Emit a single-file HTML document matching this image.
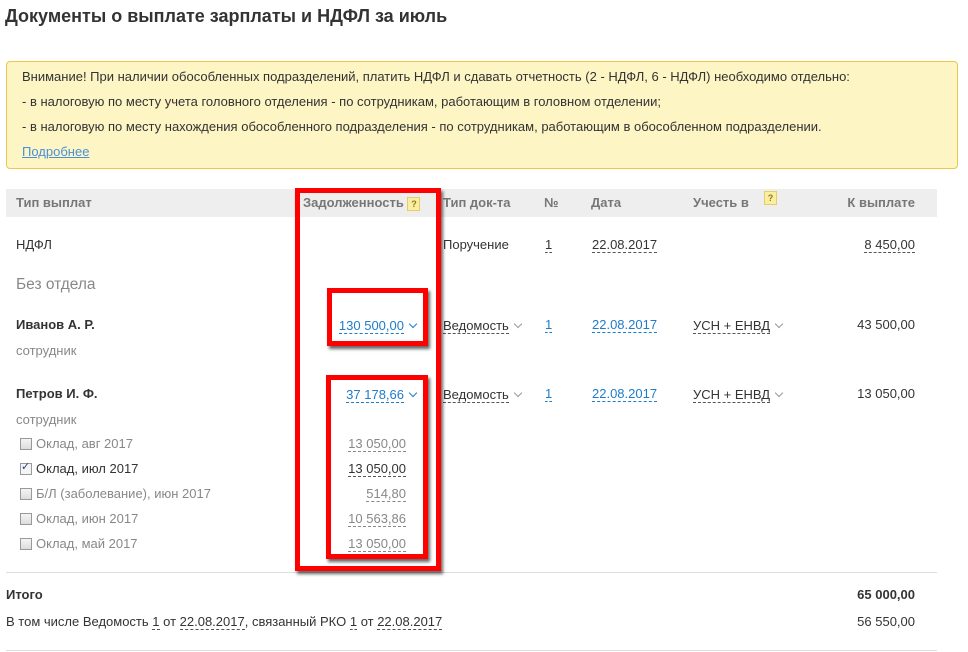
<!DOCTYPE html>
<html><head><meta charset="utf-8"><style>
body{margin:0;width:968px;height:652px;background:#fff;font-family:"Liberation Sans",Arial,sans-serif;color:#333;font-size:13px;position:relative;overflow:hidden}
.a{position:absolute;line-height:16px;white-space:nowrap}
.r{text-align:right}
.h{color:#777;font-weight:bold;font-size:13px}
.d{border-bottom:1px dashed #555;line-height:14px}
.b{color:#1f7cc9;border-bottom:1px dashed #1f7cc9;line-height:14px}
.g{color:#888}
.gd{color:#888;border-bottom:1px dashed #888;line-height:14px}
.chev{display:inline-block;width:5px;height:5px;border-right:1px solid #999;border-bottom:1px solid #999;transform:rotate(45deg);margin-left:6px;position:relative;top:-3px}
.cb{position:absolute;width:10px;height:10px;border:1px solid #999;background:linear-gradient(#f4f4f4,#ddd)}
.q{display:inline-block;width:11px;height:12px;background:#fbeea0;border:1px solid #e3cf6a;color:#8a7a20;font-size:9px;line-height:12px;text-align:center;vertical-align:middle;font-weight:bold}
.red{position:absolute;border:5px solid #f00;box-shadow:2px 3px 3px rgba(0,0,0,.6)}
</style></head><body>
<div class="a" style="left:5px;top:5px;font-size:18px;font-weight:bold;color:#333;line-height:22px">Документы о выплате зарплаты и НДФЛ за июль</div>
<div style="position:absolute;left:6px;top:61px;width:950px;height:106px;background:#fdf5c4;border:1px solid #eac94a;border-radius:4px"></div>
<div class="a" style="left:22px;top:69px">Внимание! При наличии обособленных подразделений, платить НДФЛ и сдавать отчетность (2 - НДФЛ, 6 - НДФЛ) необходимо отдельно:</div>
<div class="a" style="left:22px;top:94px">- в налоговую по месту учета головного отделения - по сотрудникам, работающим в головном отделении;</div>
<div class="a" style="left:22px;top:119px">- в налоговую по месту нахождения обособленного подразделения - по сотрудникам, работающим в обособленном подразделении.</div>
<div class="a" style="left:22px;top:144px;color:#4a90d9;text-decoration:underline">Подробнее</div>

<div style="position:absolute;left:6px;top:189px;width:931px;height:28px;background:#eeeeee"></div>
<div class="a h" style="left:16px;top:195px">Тип выплат</div>
<div class="a h" style="left:303px;top:195px">Задолженность <span class="q">?</span></div>
<div class="a h" style="left:443px;top:195px">Тип док-та</div>
<div class="a h" style="left:544px;top:195px">№</div>
<div class="a h" style="left:591px;top:195px">Дата</div>
<div class="a h" style="left:693px;top:195px">Учесть в</div>
<div class="a" style="left:764px;top:189px"><span class="q">?</span></div>
<div class="a h r" style="right:53px;top:195px">К выплате</div>

<div class="a" style="left:16px;top:237px">НДФЛ</div>
<div class="a" style="left:443px;top:237px">Поручение</div>
<div class="a d" style="left:545px;top:238px">1</div>
<div class="a d" style="left:592px;top:238px">22.08.2017</div>
<div class="a d" style="right:53px;top:238px">8 450,00</div>

<div class="a g" style="left:16px;top:276px;font-size:15.5px;line-height:18px">Без отдела</div>

<div class="a" style="left:16px;top:317px;font-weight:bold">Иванов А. Р.</div>
<div class="a g" style="left:16px;top:343px">сотрудник</div>
<div class="a" style="right:552px;top:318px"><span class="b">130 500,00</span><span class="chev" style="border-color:#1f7cc9"></span></div>
<div class="a" style="left:443px;top:318px"><span class="d">Ведомость</span><span class="chev"></span></div>
<div class="a b" style="left:545px;top:318px">1</div>
<div class="a b" style="left:592px;top:318px">22.08.2017</div>
<div class="a" style="left:693px;top:318px"><span class="d">УСН + ЕНВД</span><span class="chev"></span></div>
<div class="a r" style="right:53px;top:317px">43 500,00</div>

<div class="a" style="left:16px;top:386px;font-weight:bold">Петров И. Ф.</div>
<div class="a g" style="left:16px;top:412px">сотрудник</div>
<div class="a" style="right:552px;top:387px"><span class="b">37 178,66</span><span class="chev" style="border-color:#1f7cc9"></span></div>
<div class="a" style="left:443px;top:387px"><span class="d">Ведомость</span><span class="chev"></span></div>
<div class="a b" style="left:545px;top:387px">1</div>
<div class="a b" style="left:592px;top:387px">22.08.2017</div>
<div class="a" style="left:693px;top:387px"><span class="d">УСН + ЕНВД</span><span class="chev"></span></div>
<div class="a r" style="right:53px;top:386px">13 050,00</div>

<div class="cb" style="left:20px;top:438px"></div><div class="a g" style="left:36px;top:436px">Оклад, авг 2017</div><div class="a gd" style="right:562px;top:437px">13 050,00</div>
<div class="cb" style="left:20px;top:463px;background:#f4f4f4"><span style="position:absolute;left:0;top:-4px;font-size:11px;color:#2a3f8f">✓</span></div><div class="a" style="left:36px;top:461px">Оклад, июл 2017</div><div class="a d" style="right:562px;top:462px">13 050,00</div>
<div class="cb" style="left:20px;top:488px"></div><div class="a g" style="left:36px;top:486px">Б/Л (заболевание), июн 2017</div><div class="a gd" style="right:562px;top:487px">514,80</div>
<div class="cb" style="left:20px;top:513px"></div><div class="a g" style="left:36px;top:511px">Оклад, июн 2017</div><div class="a gd" style="right:562px;top:512px">10 563,86</div>
<div class="cb" style="left:20px;top:538px"></div><div class="a g" style="left:36px;top:536px">Оклад, май 2017</div><div class="a gd" style="right:562px;top:537px">13 050,00</div>

<div style="position:absolute;left:6px;top:572px;width:931px;height:1px;background:#ddd"></div>
<div class="a" style="left:6px;top:587px;font-weight:bold">Итого</div>
<div class="a" style="right:53px;top:587px;font-weight:bold">65 000,00</div>
<div class="a" style="left:6px;top:614px">В том числе Ведомость <span class="d">1</span> от <span class="d">22.08.2017</span>, связанный РКО <span class="d">1</span> от <span class="d">22.08.2017</span></div>
<div class="a" style="right:53px;top:614px">56 550,00</div>
<div style="position:absolute;left:6px;top:650px;width:931px;height:1px;background:#ddd"></div>

<div class="red" style="left:295px;top:188px;width:136px;height:373px"></div>
<div class="red" style="left:327px;top:288px;width:91px;height:48px"></div>
<div class="red" style="left:326px;top:375px;width:92px;height:174px"></div>
</body></html>
